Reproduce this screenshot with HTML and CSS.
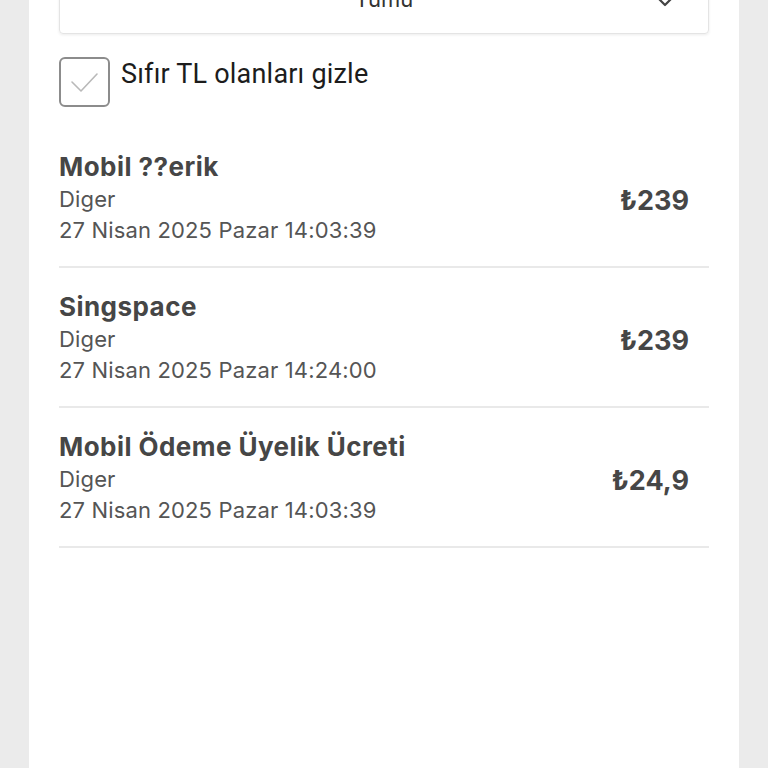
FILE: index.html
```html
<!DOCTYPE html>
<html>
<head>
    <title>Harcamalar</title>
    <link rel="stylesheet" href="styles.css">
</head>
<body>
    <div class="panel">
        <div class="select-box">
            <span class="select-value">Tümü</span>
            <svg class="chevron" width="20" height="12" viewBox="0 0 20 12">
                <path d="M2 2 L10 10 L18 2" fill="none" stroke="#444" stroke-width="2.2" stroke-linejoin="round"/>
            </svg>
        </div>

        <label class="filter">
            <span class="checkbox">
                <svg width="51" height="50" viewBox="0 0 51 50">
                    <path d="M13 25 L22 34 L38 17" fill="none" stroke="#b9b9b9" stroke-width="1.6" stroke-linecap="round" stroke-linejoin="round"/>
                </svg>
            </span>
            <span class="filter-text">Sıfır TL olanları gizle</span>
        </label>

        <ul class="list">
            <li class="item">
                <div class="info">
                    <div class="title">Mobil ??erik</div>
                    <div class="sub">Diger</div>
                    <div class="sub">27 Nisan 2025 Pazar 14:03:39</div>
                </div>
                <div class="price">₺239</div>
            </li>
            <li class="item">
                <div class="info">
                    <div class="title">Singspace</div>
                    <div class="sub">Diger</div>
                    <div class="sub">27 Nisan 2025 Pazar 14:24:00</div>
                </div>
                <div class="price">₺239</div>
            </li>
            <li class="item">
                <div class="info">
                    <div class="title">Mobil Ödeme Üyelik Ücreti</div>
                    <div class="sub">Diger</div>
                    <div class="sub">27 Nisan 2025 Pazar 14:03:39</div>
                </div>
                <div class="price">₺24,9</div>
            </li>
        </ul>
    </div>
</body>
</html>
```
FILE: styles.css
```css
html, body {
    height: 100%;
}
body {
    margin: 0;
    background-color: #ebebeb;
    font-family: Inter, Lato, sans-serif;
    color: #444;
    overflow: hidden;
}
.panel {
    margin: 0 29px;
    padding: 0 30px;
    background-color: #fff;
    min-height: calc(100% + 42px);
}
/* page is scrolled a bit, dropdown sits above the top edge */
.select-box {
    margin-top: -42px;
    height: 76px;
    border: 1px solid #e4e4e4;
    border-radius: 4px;
    box-shadow: 0 1px 3px rgba(0, 0, 0, 0.08);
    box-sizing: border-box;
    display: flex;
    align-items: center;
    justify-content: center;
    position: relative;
}
.select-value {
    font-size: 22px;
    color: #333;
    margin-top: 6px;
}
.chevron {
    position: absolute;
    right: 33px;
    top: 36px;
}
.filter {
    display: flex;
    align-items: flex-start;
    gap: 11px;
    margin-top: 23px;
}
.checkbox {
    width: 51px;
    height: 50px;
    border: 2px solid #8c8c8c;
    border-radius: 6px;
    box-sizing: border-box;
    display: flex;
    align-items: center;
    justify-content: center;
}
.checkbox svg {
    flex-shrink: 0;
}
.filter-text {
    font-family: Roboto, sans-serif;
    font-size: 27px;
    letter-spacing: 0.2px;
    color: #1c1c1c;
    line-height: 32px;
    margin-top: 1px;
}
.list {
    list-style: none;
    margin: 21px 0 0;
    padding: 0;
}
.item {
    display: flex;
    align-items: center;
    justify-content: space-between;
    padding: 23px 20px 20px 0;
    border-bottom: 2px solid #e9e9e9;
}
.title {
    font-size: 26px;
    font-weight: bold;
    letter-spacing: 0.45px;
    line-height: 31px;
    margin-bottom: 2px;
    color: #464646;
}
.sub {
    font-size: 22px;
    letter-spacing: 0.15px;
    line-height: 31px;
    color: #555;
}
.price {
    font-size: 27px;
    font-weight: bold;
    color: #464646;
    margin-top: 4px;
}
```
